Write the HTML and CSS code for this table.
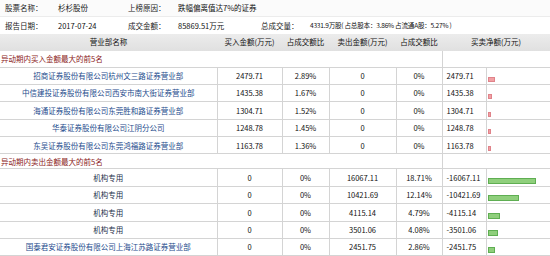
FILE: index.html
```html
<!DOCTYPE html>
<html lang="zh-CN">
<head>
<meta charset="utf-8">
<title>龙虎榜</title>
<link rel="stylesheet" href="styles.css">
</head>
<body>
<div class="info">
  <div class="info-row first">
    <span class="lbl">股票名称：</span><span class="val">杉杉股份</span>
    <span class="lbl">上榜原因：</span><span class="val span2">跌幅偏离值达7%的证券</span>
  </div>
  <div class="info-row">
    <span class="lbl">报告日期：</span><span class="val">2017-07-24</span>
    <span class="lbl">成交金额：</span><span class="val">85869.51万元</span>
    <span class="lbl">总成交量：</span><span class="val small">4331.9万股( 占总股本：3.86% 占流通A股：5.27% )</span>
  </div>
</div>
<table class="grid">
  <colgroup>
    <col class="c-name"><col class="c-buy"><col class="c-bp"><col class="c-sell"><col class="c-sp"><col class="c-net"><col class="c-bar">
  </colgroup>
  <thead>
    <tr class="head">
      <th>营业部名称</th><th>买入金额(万元)</th><th>占成交额比</th><th>卖出金额(万元)</th><th>占成交额比</th><th colspan="2">买卖净额(万元)</th>
    </tr>
  </thead>
  <tbody>
    <tr class="sec sec1"><td colspan="5">异动期内买入金额最大的前5名</td><td colspan="2" class="gap"></td></tr>
    <tr class="row"><td class="name">招商证券股份有限公司杭州文三路证券营业部</td><td>2479.71</td><td>2.89%</td><td>0</td><td>0%</td><td class="net">2479.71</td><td class="barc"><span class="bar buy" style="width:7.4px"></span></td></tr>
    <tr class="row"><td class="name">中信建投证券股份有限公司西安市南大街证券营业部</td><td>1435.38</td><td>1.67%</td><td>0</td><td>0%</td><td class="net">1435.38</td><td class="barc"><span class="bar buy" style="width:4.3px"></span></td></tr>
    <tr class="row"><td class="name">海通证券股份有限公司东莞胜和路证券营业部</td><td>1304.71</td><td>1.52%</td><td>0</td><td>0%</td><td class="net">1304.71</td><td class="barc"><span class="bar buy" style="width:3.9px"></span></td></tr>
    <tr class="row"><td class="name">华泰证券股份有限公司江阴分公司</td><td>1248.78</td><td>1.45%</td><td>0</td><td>0%</td><td class="net">1248.78</td><td class="barc"><span class="bar buy" style="width:3.7px"></span></td></tr>
    <tr class="row"><td class="name">东吴证券股份有限公司东莞鸿福路证券营业部</td><td>1163.78</td><td>1.36%</td><td>0</td><td>0%</td><td class="net">1163.78</td><td class="barc"><span class="bar buy" style="width:3.5px"></span></td></tr>
    <tr class="sec sec2"><td colspan="5">异动期内卖出金额最大的前5名</td><td colspan="2" class="gap"></td></tr>
    <tr class="row"><td class="name plain">机构专用</td><td>0</td><td>0%</td><td>16067.11</td><td>18.71%</td><td class="net">-16067.11</td><td class="barc"><span class="bar sell" style="width:48px"></span></td></tr>
    <tr class="row"><td class="name plain">机构专用</td><td>0</td><td>0%</td><td>10421.69</td><td>12.14%</td><td class="net">-10421.69</td><td class="barc"><span class="bar sell" style="width:31.1px"></span></td></tr>
    <tr class="row"><td class="name plain">机构专用</td><td>0</td><td>0%</td><td>4115.14</td><td>4.79%</td><td class="net">-4115.14</td><td class="barc"><span class="bar sell" style="width:12.3px"></span></td></tr>
    <tr class="row"><td class="name plain">机构专用</td><td>0</td><td>0%</td><td>3501.06</td><td>4.08%</td><td class="net">-3501.06</td><td class="barc"><span class="bar sell" style="width:10.5px"></span></td></tr>
    <tr class="row"><td class="name">国泰君安证券股份有限公司上海江苏路证券营业部</td><td>0</td><td>0%</td><td>2451.75</td><td>2.86%</td><td class="net">-2451.75</td><td class="barc"><span class="bar sell" style="width:7.3px"></span></td></tr>
  </tbody>
</table>
</body>
</html>
```

FILE: styles.css
```css
html, body {
  margin: 0;
  padding: 0;
  background: #ffffff;
}
body {
  width: 550px;
  height: 256px;
  overflow: hidden;
  font-family: "Noto Sans CJK SC", "Noto Sans", sans-serif;
  font-size: 7.5px;
  line-height: 1;
  color: #111;
}
.info-row {
  display: grid;
  grid-template-columns: 53px 70px 50px 83px 49px 1fr;
  align-items: center;
  height: 16.5px;
  padding-left: 5px;
  white-space: nowrap;
}
.info-row.first {
  border-bottom: 1px solid #ececec;
  height: 16px;
  background: #fbfbfb;
}
.lbl { color: #222; }
.val { color: #111; }
.span2 { grid-column: span 3; }
.small {
  font-size: 6.6px;
  letter-spacing: -0.25px;
}

.grid {
  width: 550px;
  table-layout: fixed;
  border-collapse: collapse;
  border-spacing: 0;
}
.c-name { width: 217px; }
.c-buy { width: 65px; }
.c-bp { width: 47px; }
.c-sell { width: 67px; }
.c-sp { width: 46px; }
.c-net { width: 44px; }
.c-bar { width: 64px; }

.head { height: 17px; }
.head th {
  padding: 0;
  font-weight: normal;
  color: #111;
  background: linear-gradient(#ececec, #e0e0e0);
  text-align: center;
  white-space: nowrap;
}
.sec td {
  padding: 0 0 0 1px;
  color: #8b1a1a;
  text-align: left;
  white-space: nowrap;
  border-bottom: 1px solid #d4d4d4;
}
.sec1 { height: 16.5px; }
.sec2 { height: 15px; }
.sec td.gap { border-left: 1px solid #d4d4d4; }

.row { height: 17.4px; }
.row td {
  padding: 0;
  text-align: center;
  white-space: nowrap;
  border-bottom: 1px solid #d4d4d4;
  border-left: 1px solid #d4d4d4;
  color: #111;
}
.row td.name {
  border-left: none;
  color: #1d4b8c;
}
.row td.name.plain { color: #25304a; }
.row td.net {
  text-align: left;
  padding-left: 4px;
}
.row td.barc {
  text-align: left;
  vertical-align: bottom;
  padding: 0 0 2px 1px;
}
.bar {
  display: block;
  box-sizing: border-box;
}
.bar.buy {
  height: 5px;
  background: #f2a0a4;
  border: 1px solid #e0838a;
}
.bar.sell {
  height: 6px;
  background: #8fcf7c;
  border: 1px solid #5fae52;
}
```
